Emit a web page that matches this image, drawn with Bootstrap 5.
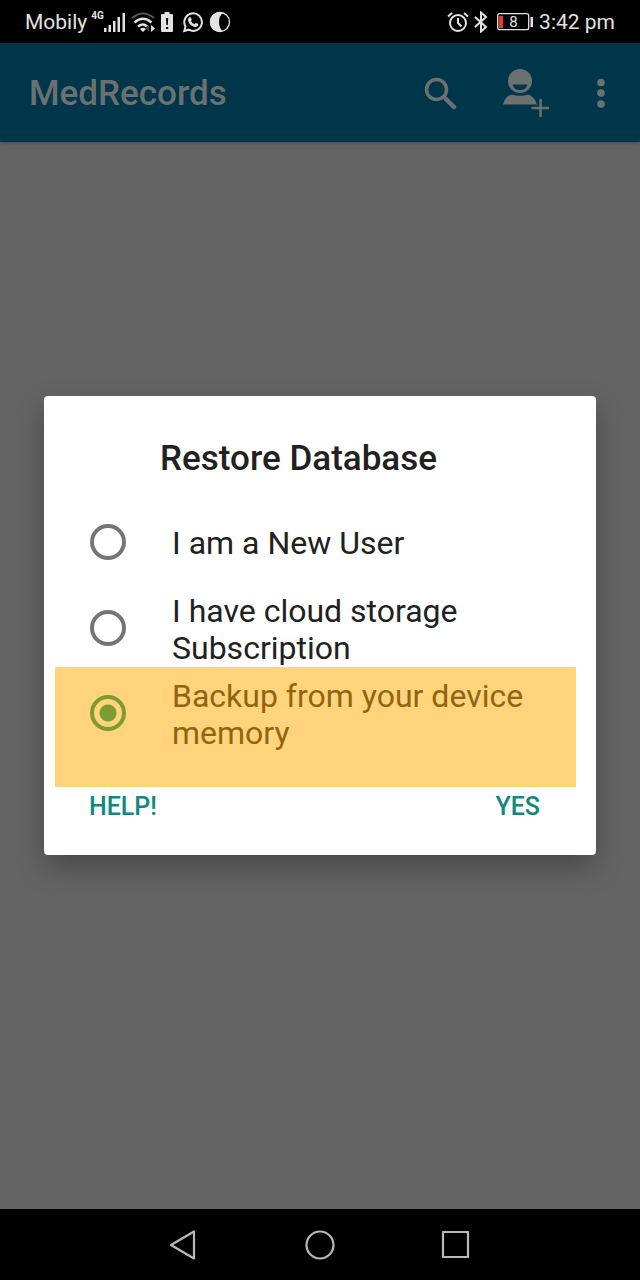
<!DOCTYPE html>
<html lang="en">
<head>
<meta charset="utf-8">
<meta name="viewport" content="width=device-width, initial-scale=1">
<title>MedRecords</title>
<link href="https://cdn.jsdelivr.net/npm/bootstrap@5.3.0/dist/css/bootstrap.min.css" rel="stylesheet">
<style>
  body { font-family: Roboto, "Noto Sans", sans-serif; background: #646464; color: #212121; }
  svg { display: block; flex: none; }
  .status-bar { background: #000; color: #e2e2e2; height: 43px; padding: 0 25px; font-size: 21px; line-height: 24px; }
  .net-type { font-size: 10px; line-height: 12px; font-weight: 700; }
  .status-icons { gap: 6px; }
  .app-bar { background: #003649; color: #6b7173; height: 99px; padding: 2px 31px 0 29px; box-shadow: 0 1px 3px rgba(0,0,0,.3); }
  .app-title { font-size: 35px; line-height: 44px; font-weight: 500; }
  .app-tools { gap: 44px; }
  .plain-btn { background: none; border: 0; padding: 0; color: inherit; }
  .scrim { position: absolute; inset: 0; padding: 0 44px 2px; }
  .dialog-box { background: #fff; border-radius: 4px; padding: 39px 20px 29px 11px; box-shadow: 0 12px 28px rgba(0,0,0,.28); }
  .dialog-title { font-size: 35px; line-height: 48px; font-weight: 500; margin: 0 34px 20px 0; }
  .choice { min-height: 78px; padding: 0 35px; gap: 46px; font-size: 32px; line-height: 37px; }
  .choice span { padding-top: 4px; }
  .choice .form-check-input { width: 36px; height: 36px; margin: 0; border: 4px solid #757575; background: none; flex: none; }
  .choice.picked { color: #936410; background: #ffd47c; padding-top: 7px; padding-bottom: 35px; }
  .choice.picked .form-check-input { border-color: #7f9c34; background: radial-gradient(circle, #7f9c34 8px, transparent 9px); }
  .actions { padding: 1px 36px 0 34px; color: #11887b; }
  .actions button { font-size: 25px; line-height: 38px; font-weight: 500; }
  .nav-keys { background: #000; color: #b9b9b9; height: 71px; gap: 104px; }
</style>
</head>
<body>
<div class="d-flex flex-column min-vh-100">
  <div class="status-bar d-flex align-items-center justify-content-between">
    <div class="status-icons d-flex align-items-center">
      <div class="d-flex align-items-center">
        <span>Mobily</span>
        <span class="net-type align-self-start ms-1">4G</span>
        <svg width="21" height="22" viewBox="0 0 21 22" fill="currentColor"><path d="M0 17h2.500v4H0zM4.500 14H7v7H4.500zM9 10h2.500v11H9zM13.500 6H16v15h-2.500zM18.500 2H21v19h-2.500z"/></svg>
      </div>
      <svg width="24" height="22" viewBox="0 0 24 22" fill="none" stroke="currentColor" stroke-width="2"><path stroke="#555" d="M1 7Q12-2 23 7"/><path stroke-width="2.500" d="M3.500 11.500q8.500-7.500 17 0M7 15.500q5-4 9 0"/><path d="M9 18q3-2.500 6 0L12 21z" fill="currentColor" stroke="none"/><path d="m20 14 4 3.500-4 3.500z" fill="currentColor" stroke="none"/><path d="m18 14-3 3.500 3 3.500z" fill="#444" stroke="none"/></svg>
      <svg width="12" height="22" viewBox="0 0 12 22"><path fill="currentColor" d="M3.500 1h5v2H11q1 0 1 1v16q0 1-1 1H1q-1 0-1-1V4q0-1 1-1h2.500z"/><path d="M5 7h2.200l-.4 7H5.400zM5 16h2.200v2H5z"/></svg>
      <svg width="24" height="22" viewBox="-3 0 24 22"><path d="M2.300 20 3.500 15.500A8.800 8.800 0 1 1 6.700 18.700z" fill="none" stroke="currentColor" stroke-width="2"/><path fill="currentColor" d="M7 6.500q1-1 1.700 0l1 2q.2.500-.8 1.600 1.300 2.400 3.500 3.200l1.200-1.300q.4-.3 2.200.7.900.4.400 1.500-1 2.200-3.400 1.700-5.400-1.200-6.800-6.300-.1-1.900 1-3.100z"/></svg>
      <svg width="22" height="22" viewBox="0 0 22 22"><circle cx="11" cy="11" r="9.500" fill="none" stroke="currentColor" stroke-width="1.300"/><path fill="currentColor" d="M14 1.500A10 10 0 1 0 14 20.500Q10 17 10 11t4-9.500z"/></svg>
    </div>
    <div class="d-flex align-items-center">
      <svg width="22" height="22" viewBox="0 0 22 22" fill="none" stroke="currentColor" stroke-width="2"><circle cx="11" cy="12" r="8"/><path d="M11 7v5l3.500 3.500M1 5.500l4-3.500M21 5.500 17 2"/></svg>
      <svg class="ms-1" width="16" height="22" viewBox="0 0 16 22" fill="none" stroke="currentColor" stroke-width="2"><path d="m2 6 11 10-5 4.500v-19L13 6 2 16"/></svg>
      <svg class="ms-2 me-1" width="38" height="20" viewBox="0 0 38 20"><rect x=".7" y="1.700" width="31" height="16" rx="2" fill="none" stroke="currentColor" stroke-width="1.300"/><path fill="#e33b32" d="M2 4h4v12H2z"/><path fill="currentColor" d="M33.500 5H36v10h-2.500z"/><text x="16.500" y="15" text-anchor="middle" font-size="15" fill="currentColor">8</text></svg>
      <span>3:42 pm</span>
    </div>
  </div>

  <div class="position-relative flex-grow-1 d-flex flex-column">
    <header class="app-bar d-flex align-items-center justify-content-between">
      <span class="app-title">MedRecords</span>
      <div class="app-tools d-flex align-items-center">
        <button class="plain-btn" type="button" aria-label="Search"><svg width="34" height="34" viewBox="0 0 34 34" fill="none" stroke="currentColor"><circle cx="13.500" cy="12.500" r="10" stroke-width="3.500"/><path d="m20.500 19.500 4 4" stroke-width="3.500"/><path d="m23.500 22.500 7.500 7.500" stroke-width="4.500" stroke-linecap="round"/></svg></button>
        <button class="plain-btn" type="button" aria-label="Add patient"><svg width="48" height="54" viewBox="0 0 48 54"><circle cx="19" cy="14" r="12" fill="currentColor"/><path fill="#003649" d="M11.500 17.500h15q-1.500 5.500-7.500 5.500t-7.500-5.500z"/><path fill="currentColor" d="M2 37.500q2-8.500 9-10 8 2.500 16 0 6 1.500 9 10z"/><path d="M39.500 32v18M30.500 41h18" fill="none" stroke="#003649" stroke-width="5"/><path d="M39.500 32v18M30.500 41H48" fill="none" stroke="currentColor" stroke-width="2.500"/></svg></button>
        <button class="plain-btn" type="button" aria-label="More options"><svg width="16" height="34" viewBox="0 0 16 34" fill="currentColor"><circle cx="8" cy="5.500" r="3.800"/><circle cx="8" cy="16" r="3.800"/><circle cx="8" cy="27" r="3.800"/></svg></button>
      </div>
    </header>
    <main class="scrim d-flex align-items-center">
      <form class="dialog-box w-100" role="dialog" aria-labelledby="dialog-title">
        <h1 class="dialog-title text-center" id="dialog-title">Restore Database</h1>
        <label class="choice d-flex align-items-center mb-2"><input class="form-check-input" type="radio" name="source"><span>I am a New User</span></label>
        <label class="choice d-flex align-items-center"><input class="form-check-input" type="radio" name="source"><span>I have cloud storage<br>Subscription</span></label>
        <label class="choice picked d-flex align-items-center"><input class="form-check-input" type="radio" name="source" checked><span>Backup from your device memory</span></label>
        <div class="actions d-flex justify-content-between">
          <button class="plain-btn" type="button">HELP!</button>
          <button class="plain-btn" type="button">YES</button>
        </div>
      </form>
    </main>
  </div>

  <nav class="nav-keys d-flex align-items-center justify-content-center">
    <button class="plain-btn" type="button" aria-label="Back"><svg width="32" height="32" viewBox="0 0 32 32" fill="none" stroke="currentColor" stroke-width="2.200" stroke-linejoin="round"><path d="M3 16 26 2.500v27z"/></svg></button>
    <button class="plain-btn" type="button" aria-label="Home"><svg width="32" height="32" viewBox="0 0 32 32" fill="none" stroke="currentColor" stroke-width="2.200"><circle cx="16" cy="16" r="13.500"/></svg></button>
    <button class="plain-btn" type="button" aria-label="Recent apps"><svg width="32" height="32" viewBox="0 0 32 32" fill="none" stroke="currentColor" stroke-width="2.200" stroke-linejoin="round"><path d="M3 3h25v25H3z"/></svg></button>
  </nav>
</div>
<script src="https://cdn.jsdelivr.net/npm/bootstrap@5.3.0/dist/js/bootstrap.bundle.min.js"></script>
</body>
</html>
